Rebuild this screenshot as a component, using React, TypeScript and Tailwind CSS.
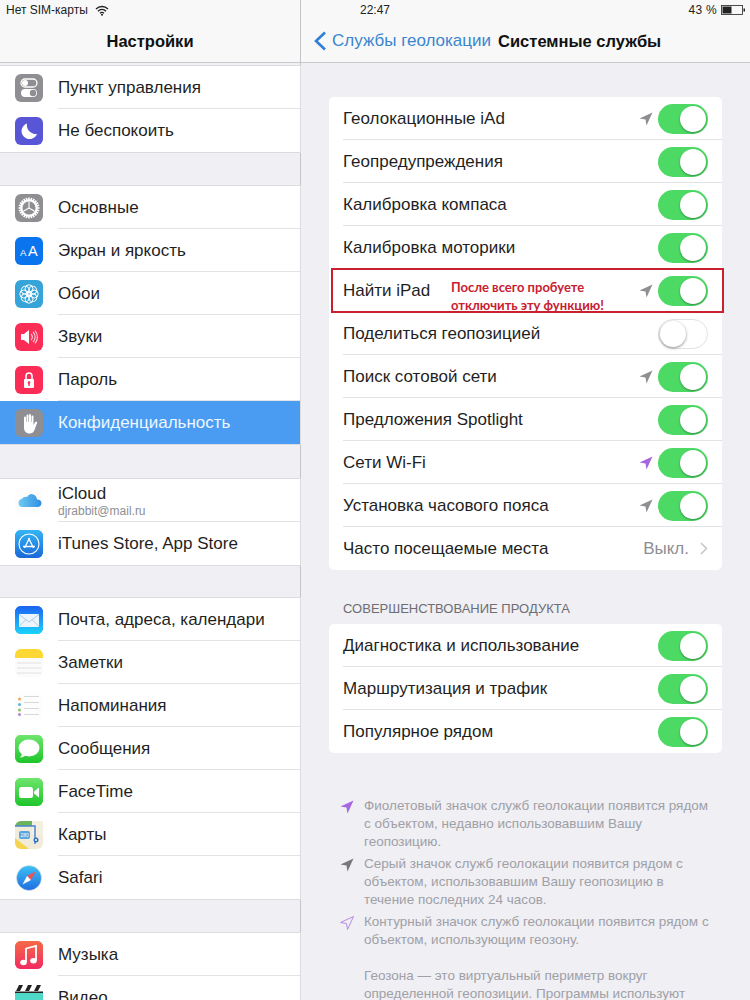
import React from "react";

const Box = ({ bg, children }: { bg: string; children?: React.ReactNode }) => (
  <svg width="28" height="28" viewBox="0 0 28 28" className="shrink-0">
    <rect width="28" height="28" rx="6" fill={bg} />
    {children}
  </svg>
);

const gearTeeth = Array.from({ length: 24 }, (_, i) => i * 15);

const icons: Record<string, React.ReactNode> = {
  control: (
    <Box bg="#8e8e93">
      <rect x="6" y="5" width="16" height="8" rx="4" fill="none" stroke="#fff" strokeWidth="1.3" />
      <circle cx="10" cy="9" r="3" fill="#fff" />
      <rect x="6" y="15" width="16" height="8" rx="4" fill="#fff" />
      <circle cx="18" cy="19" r="3.2" fill="#8e8e93" />
    </Box>
  ),
  moon: (
    <Box bg="#5856d6">
      <path d="M12 6.5a8 8 0 1 0 10 10.5 9 9 0 0 1-10-10.500z" fill="#fff" />
    </Box>
  ),
  gear: (
    <Box bg="#8e8e93">
      {gearTeeth.map((a) => (
        <rect key={a} x="13.2" y="3.500" width="1.600" height="4" fill="#fff" transform={`rotate(${a} 14 14)`} />
      ))}
      <circle cx="14" cy="14" r="7.800" fill="none" stroke="#fff" strokeWidth="1.800" />
      <path d="M14 14V7.500M14 14l-5.600 3.300M14 14l5.600 3.300" stroke="#fff" strokeWidth="1.100" />
    </Box>
  ),
  display: (
    <Box bg="#0a73ee">
      <text x="5" y="19" fill="#fff" fontSize="9.500" fontFamily="Liberation Sans">A</text>
      <text x="13" y="19" fill="#fff" fontSize="14.500" fontFamily="Liberation Sans">A</text>
    </Box>
  ),
  wallpaper: (
    <Box bg="#36a4d8">
      {[0, 45, 90, 135, 180, 225, 270, 315].map((a) => (
        <circle key={a} cx="14" cy="8.800" r="4" fill="none" stroke="#fff" strokeWidth="1" transform={`rotate(${a} 14 14)`} />
      ))}
      <circle cx="14" cy="14" r="3" fill="none" stroke="#fff" strokeWidth="1" />
    </Box>
  ),
  sound: (
    <Box bg="#fb2c55">
      <path d="M6 11h3l5-4v14l-5-4H6z" fill="#fff" />
      <path d="M16 11a4 4 0 0 1 0 6M18 9a7 7 0 0 1 0 10M20 7.500a10 10 0 0 1 0 13" fill="none" stroke="#fff" strokeWidth="1.100" opacity="0.8" />
    </Box>
  ),
  lock: (
    <Box bg="#fb2c55">
      <path d="M11 13v-3a3 3 0 0 1 6 0v3" fill="none" stroke="#fff" strokeWidth="1.600" />
      <rect x="9" y="13" width="10" height="9" rx="1" fill="#fff" />
      <rect x="13.300" y="16" width="1.400" height="4" fill="#fb2c55" />
      <circle cx="14" cy="16.500" r="1.300" fill="#fb2c55" />
    </Box>
  ),
  hand: (
    <Box bg="#8e8e93">
      <path
        d="M9 14V8.500a1 1 0 0 1 2 0V13h.5V6.500a1 1 0 0 1 2 0V13h.5V6a1 1 0 0 1 2 0v7h.5V7.500a1 1 0 0 1 2 0V16l1.700-3a1.100 1.100 0 0 1 1.900 1.100L19.500 21c-1 2.500-2.500 3.500-5 3.500-3.500 0-5.500-2.500-5.500-6z"
        fill="#fff"
      />
    </Box>
  ),
  icloud: (
    <Box bg="#fdfdfd">
      <defs>
        <linearGradient id="cl" x1="0" y1="0" x2="1" y2="0">
          <stop offset="0" stopColor="#6fc9f5" />
          <stop offset="1" stopColor="#2f8fe0" />
        </linearGradient>
      </defs>
      <path d="M7.500 20a4 4 0 0 1-.8-7.900A5 5 0 0 1 12 10a6 6 0 0 1 4-3 6 6 0 0 1 6 5.500 3.800 3.800 0 0 1 4.500 3.700A3.800 3.800 0 0 1 22.500 20z" fill="url(#cl)" />
    </Box>
  ),
  appstore: (
    <Box bg="#1c8fe6">
      <defs>
        <linearGradient id="as" x1="0" y1="0" x2="0" y2="1">
          <stop offset="0" stopColor="#34b5f5" />
          <stop offset="1" stopColor="#1a68d8" />
        </linearGradient>
      </defs>
      <rect width="28" height="28" rx="6" fill="url(#as)" />
      <circle cx="14" cy="14" r="10" fill="none" stroke="#fff" strokeWidth="1.100" />
      <path d="M14.500 8l-5 10M13.500 8l5 10M8 16.500h12" stroke="#fff" strokeWidth="1.300" fill="none" />
    </Box>
  ),
  mail: (
    <Box bg="#1d8af0">
      <defs>
        <linearGradient id="ml" x1="0" y1="0" x2="0" y2="1">
          <stop offset="0" stopColor="#1d62f0" />
          <stop offset="1" stopColor="#1ad5fd" />
        </linearGradient>
      </defs>
      <rect width="28" height="28" rx="6" fill="url(#ml)" />
      <rect x="4" y="8" width="20" height="13" rx="1" fill="#eef5fb" />
      <path d="M4 8.500l10 7.500 10-7.500M4 20.500l7-7M24 20.500l-7-7" fill="none" stroke="#9cc3e6" strokeWidth="0.800" />
    </Box>
  ),
  notes: (
    <Box bg="#fbfbfb">
      <path d="M0 9V6a6 6 0 0 1 6-6h16a6 6 0 0 1 6 6v3z" fill="#fdd835" />
      <path d="M2 14h24M2 19h24M2 24h24" stroke="#dcdcdc" strokeWidth="0.800" />
    </Box>
  ),
  reminders: (
    <Box bg="#fdfdfd">
      <path d="M9 4.500h15M9 10.500h15M9 16.500h15M9 22.500h15" stroke="#d4d4d4" strokeWidth="0.900" />
      <circle cx="4.500" cy="7" r="1.500" fill="#f0a35e" />
      <circle cx="4.500" cy="12.500" r="1.500" fill="#5bb5d5" />
      <circle cx="4.500" cy="18" r="1.500" fill="#8cc269" />
      <circle cx="4.500" cy="22.500" r="1.500" fill="#b088c9" />
    </Box>
  ),
  messages: (
    <Box bg="#3fd44b">
      <defs>
        <linearGradient id="ms" x1="0" y1="0" x2="0" y2="1">
          <stop offset="0" stopColor="#6fe56d" />
          <stop offset="1" stopColor="#1ec52b" />
        </linearGradient>
      </defs>
      <rect width="28" height="28" rx="6" fill="url(#ms)" />
      <ellipse cx="14" cy="13" rx="10.500" ry="8.500" fill="#fff" />
      <path d="M7 18c0 2-1 4-2.500 4.500 3 .3 5-1 6-2.500z" fill="#fff" />
    </Box>
  ),
  facetime: (
    <Box bg="#3fd44b">
      <defs>
        <linearGradient id="ft" x1="0" y1="0" x2="0" y2="1">
          <stop offset="0" stopColor="#6fe56d" />
          <stop offset="1" stopColor="#1ec52b" />
        </linearGradient>
      </defs>
      <rect width="28" height="28" rx="6" fill="url(#ft)" />
      <rect x="4" y="9" width="14" height="11" rx="2.500" fill="#fff" />
      <path d="M19 13.500l5-4v10l-5-4z" fill="#fff" />
    </Box>
  ),
  maps: (
    <Box bg="#f1ecd9">
      <path d="M0 6a6 6 0 0 1 6-6h11v5H0z" fill="#6cb45c" />
      <rect x="17" y="0" width="11" height="14" fill="#f5efe2" />
      <path d="M0 17l14 11H6a6 6 0 0 1-6-6z" fill="#f6d34f" />
      <path d="M0 5h20v18" fill="none" stroke="#4a86d2" strokeWidth="1.500" />
      <rect x="4" y="10" width="11" height="8" rx="2" fill="#5aa5dd" />
      <text x="5.500" y="16" fontSize="5" fill="#fff" fontFamily="Liberation Sans">280</text>
      <circle cx="21" cy="19" r="2.500" fill="#2c6fc9" />
      <circle cx="21" cy="19" r="1" fill="#fff" />
    </Box>
  ),
  safari: (
    <svg width="28" height="28" viewBox="0 0 28 28" className="shrink-0">
      <defs>
        <linearGradient id="sf" x1="0" y1="0" x2="0" y2="1">
          <stop offset="0" stopColor="#3fc0f5" />
          <stop offset="1" stopColor="#1f6ee0" />
        </linearGradient>
      </defs>
      <circle cx="14" cy="14" r="12.500" fill="url(#sf)" stroke="#e6e6e6" strokeWidth="0.600" />
      <path d="M20.500 7.500L12 12l4 4z" fill="#f25050" />
      <path d="M7.500 20.500L16 16l-4-4z" fill="#fff" />
    </svg>
  ),
  music: (
    <Box bg="#f4485a">
      <defs>
        <linearGradient id="mu" x1="0" y1="0" x2="0" y2="1">
          <stop offset="0" stopColor="#f56a45" />
          <stop offset="1" stopColor="#f22b62" />
        </linearGradient>
      </defs>
      <rect width="28" height="28" rx="6" fill="url(#mu)" />
      <path d="M11 7.500l10-2.500v14.500" fill="none" stroke="#fff" strokeWidth="1.800" />
      <path d="M11 7v14" stroke="#fff" strokeWidth="1.800" />
      <ellipse cx="8.500" cy="21.500" rx="3.300" ry="2.700" fill="#fff" />
      <ellipse cx="18.500" cy="19.800" rx="3.300" ry="2.700" fill="#fff" />
    </Box>
  ),
  video: (
    <Box bg="#4fd8c8">
      <rect width="28" height="8" fill="#fff" />
      <path d="M1 7l3-6h4L5 7zM10 7l3-6h4l-3 6zM19 7l3-6h4l-3 6z" fill="#222" />
      <rect y="7.500" width="28" height="1.500" fill="#222" />
    </Box>
  ),
};

type Item = { key: string; label: string; sub?: string; selected?: boolean };

const groups: Item[][] = [
  [
    { key: "control", label: "Пункт управления" },
    { key: "moon", label: "Не беспокоить" },
  ],
  [
    { key: "gear", label: "Основные" },
    { key: "display", label: "Экран и яркость" },
    { key: "wallpaper", label: "Обои" },
    { key: "sound", label: "Звуки" },
    { key: "lock", label: "Пароль" },
    { key: "hand", label: "Конфиденциальность", selected: true },
  ],
  [
    { key: "icloud", label: "iCloud", sub: "djrabbit@mail.ru" },
    { key: "appstore", label: "iTunes Store, App Store" },
  ],
  [
    { key: "mail", label: "Почта, адреса, календари" },
    { key: "notes", label: "Заметки" },
    { key: "reminders", label: "Напоминания" },
    { key: "messages", label: "Сообщения" },
    { key: "facetime", label: "FaceTime" },
    { key: "maps", label: "Карты" },
    { key: "safari", label: "Safari" },
  ],
  [
    { key: "music", label: "Музыка" },
    { key: "video", label: "Видео" },
  ],
];

const Arrow = ({ color = "#8e8e93", outline = false, size = 14 }: { color?: string; outline?: boolean; size?: number }) => (
  <svg width={size} height={size} viewBox="0 0 14 14" className="shrink-0">
    <path
      d="M13.500 0.500L0.500 6.500l6 1 1 6z"
      fill={outline ? "none" : color}
      stroke={outline ? color : "none"}
      strokeWidth={outline ? 1 : 0}
    />
  </svg>
);

const Toggle = ({ on = true }: { on?: boolean }) =>
  on ? (
    <div className="flex h-[30px] w-[50px] shrink-0 justify-end rounded-full bg-[#4cd964] p-[2px]">
      <div className="h-[26px] w-[26px] rounded-full bg-white shadow-[0_1px_2px_rgba(0,0,0,0.35)]" />
    </div>
  ) : (
    <div className="flex h-[30px] w-[50px] shrink-0 justify-start rounded-full border border-[#e2e2e4] bg-white p-[1px]">
      <div className="h-[26px] w-[26px] rounded-full bg-white shadow-[0_1px_3px_rgba(0,0,0,0.45)]" />
    </div>
  );

type Row = { label: string; arrow?: string; on?: boolean; value?: string };

const system: Row[] = [
  { label: "Геолокационные iAd", arrow: "#8e8e93" },
  { label: "Геопредупреждения" },
  { label: "Калибровка компаса" },
  { label: "Калибровка моторики" },
  { label: "Найти iPad", arrow: "#8e8e93" },
  { label: "Поделиться геопозицией", on: false },
  { label: "Поиск сотовой сети", arrow: "#8e8e93" },
  { label: "Предложения Spotlight" },
  { label: "Сети Wi-Fi", arrow: "#a566e0" },
  { label: "Установка часового пояса", arrow: "#8e8e93" },
  { label: "Часто посещаемые места", value: "Выкл." },
];

const product: Row[] = [
  { label: "Диагностика и использование" },
  { label: "Маршрутизация и трафик" },
  { label: "Популярное рядом" },
];

const Card = ({ rows }: { rows: Row[] }) => (
  <div className="overflow-hidden rounded-[5px] bg-white pl-[14px]">
    {rows.map((r, i) => (
      <div
        key={r.label}
        className={`flex h-[43px] items-center pr-[14px] ${i < rows.length - 1 ? "shadow-[inset_0_-1px_0_#e3e3e6]" : ""}`}
      >
        <span className="flex-1 text-[17px] text-[#1f1f1f]">{r.label}</span>
        {r.arrow && (
          <span className="mr-[5px]">
            <Arrow color={r.arrow} />
          </span>
        )}
        {r.value ? (
          <span className="flex items-center gap-[11px] text-[17px] text-[#8e8e93]">
            {r.value}
            <svg width="8" height="13" viewBox="0 0 8 13">
              <path d="M1 1l5.500 5.500L1 12" fill="none" stroke="#c7c7cc" strokeWidth="1.600" />
            </svg>
          </span>
        ) : (
          <Toggle on={r.on !== false} />
        )}
      </div>
    ))}
  </div>
);

const Note = ({ color, outline, children }: { color: string; outline?: boolean; children: React.ReactNode }) => (
  <div className="flex gap-[10px]">
    <span className="mt-[3px]">
      <Arrow color={color} outline={outline} />
    </span>
    <p>{children}</p>
  </div>
);

export default function App() {
  return (
    <div
      className="relative flex h-[1000px] w-[750px] overflow-hidden bg-[#efeff4] text-black"
      style={{ fontFamily: '"Liberation Sans", "Noto Sans", sans-serif' }}
    >
      {/* Sidebar */}
      <aside className="flex h-full w-[301px] shrink-0 flex-col border-r border-[#c4c4c8]">
        <header className="flex h-[63px] shrink-0 items-end justify-center border-b border-[#c9c9cc] bg-[#f8f8f8] pb-[11px]">
          <h1 className="text-[16.5px] font-bold leading-[20px] text-[#111]">Настройки</h1>
        </header>
        <div className="mt-[3px] flex flex-col gap-[34px]">
          {groups.map((g, gi) => (
            <div
              key={gi}
              className={`bg-white shadow-[0_0_0_1px_#dcdce0] ${gi === 2 ? "-mb-[1px] mt-[1px]" : ""}`}
            >
              {g.map((it, i) => (
                <div
                  key={it.key}
                  className={`flex h-[43px] items-center pl-[15px] ${it.selected ? "bg-[#4a9cf2]" : ""}`}
                >
                  {icons[it.key]}
                  <div
                    className={`ml-[15px] flex h-full flex-1 flex-col justify-center ${
                      i < g.length - 1 && !it.selected ? "shadow-[inset_0_-1px_0_#e3e3e6]" : ""
                    }`}
                  >
                    <span className={`text-[17px] leading-[20px] ${it.selected ? "text-[#eef6ff]" : "text-[#1f1f1f]"}`}>
                      {it.label}
                    </span>
                    {it.sub && <span className="text-[12px] leading-[14px] text-[#8e8e93]">{it.sub}</span>}
                  </div>
                </div>
              ))}
            </div>
          ))}
        </div>
      </aside>

      {/* Detail */}
      <main className="flex min-w-0 flex-1 flex-col">
        <header className="flex h-[63px] shrink-0 items-end border-b border-[#c9c9cc] bg-[#f8f8f8] pb-[11px] pl-[12px]">
          <svg width="14" height="20" viewBox="0 0 14 20" className="mr-[5px]">
            <path d="M12 1.500L3 10l9 8.500" fill="none" stroke="#2f7fd8" strokeWidth="2.600" />
          </svg>
          <span className="text-[17px] leading-[20px] text-[#3a86cf]">Службы геолокации</span>
          <span className="ml-[7px] text-[16.5px] font-bold leading-[20px] text-[#111]">Системные службы</span>
        </header>

        <div className="pl-[28px] pr-[28px] pt-[34px]">
          <Card rows={system} />
          <p className="mb-[7px] ml-[14px] mt-[31px] text-[13px] leading-[16px] text-[#6d6d72]">
            СОВЕРШЕНСТВОВАНИЕ ПРОДУКТА
          </p>
          <Card rows={product} />
          <div className="ml-[11px] mt-[44px] flex flex-col gap-[4px] text-[13.5px] leading-[18px] text-[#a0a0a6]">
            <Note color="#a566e0">
              Фиолетовый значок служб геолокации появится рядом
              <br />с объектом, недавно использовавшим Вашу
              <br />геопозицию.
            </Note>
            <Note color="#77777c">
              Серый значок служб геолокации появится рядом с
              <br />объектом, использовавшим Вашу геопозицию в
              <br />течение последних 24 часов.
            </Note>
            <Note color="#b48de0" outline>
              Контурный значок служб геолокации появится рядом с
              <br />объектом, использующим геозону.
            </Note>
            <p className="ml-[24px] mt-[14px] whitespace-nowrap">
              Геозона — это виртуальный периметр вокруг
              <br />определенной геопозиции. Программы используют
            </p>
          </div>
        </div>
      </main>

      {/* Status bar */}
      <div className="absolute left-0 top-0 flex h-[20px] w-full items-center justify-between pl-[6px] pr-[5px] text-[12px] text-[#222]">
        <div className="flex items-center gap-[7px]">
          <span>Нет SIM-карты</span>
          <svg width="14" height="11" viewBox="0 0 14 11">
            <path d="M1 4a8.500 8.500 0 0 1 12 0M3 6.200a5.500 5.500 0 0 1 8 0M5 8.200a2.800 2.800 0 0 1 4 0" fill="none" stroke="#222" strokeWidth="1.300" />
            <circle cx="7" cy="9.800" r="1" fill="#222" />
          </svg>
        </div>
        <span className="absolute left-[360px]">22:47</span>
        <div className="flex items-center gap-[4px]">
          <span className="tracking-[0.3px]">43 %</span>
          <svg width="24" height="10" viewBox="0 0 24 10">
            <rect x="0.500" y="0.500" width="21" height="9" fill="none" stroke="#222" strokeWidth="0.800" />
            <rect x="1.500" y="1.500" width="9" height="7" fill="#222" />
            <rect x="22.500" y="3.500" width="1.500" height="3" fill="#222" />
          </svg>
        </div>
      </div>

      {/* Red annotation */}
      <div className="absolute left-[331px] top-[268px] h-[45px] w-[393px] border-2 border-[#c8202f]">
        <p
          className="absolute left-[118px] top-[8px] whitespace-nowrap text-[13px] font-bold leading-[18px] text-[#c8202f]"
          style={{ fontFamily: 'Lato, sans-serif' }}
        >
          После всего пробуете
          <br />
          отключить эту функцию!
        </p>
      </div>
    </div>
  );
}
